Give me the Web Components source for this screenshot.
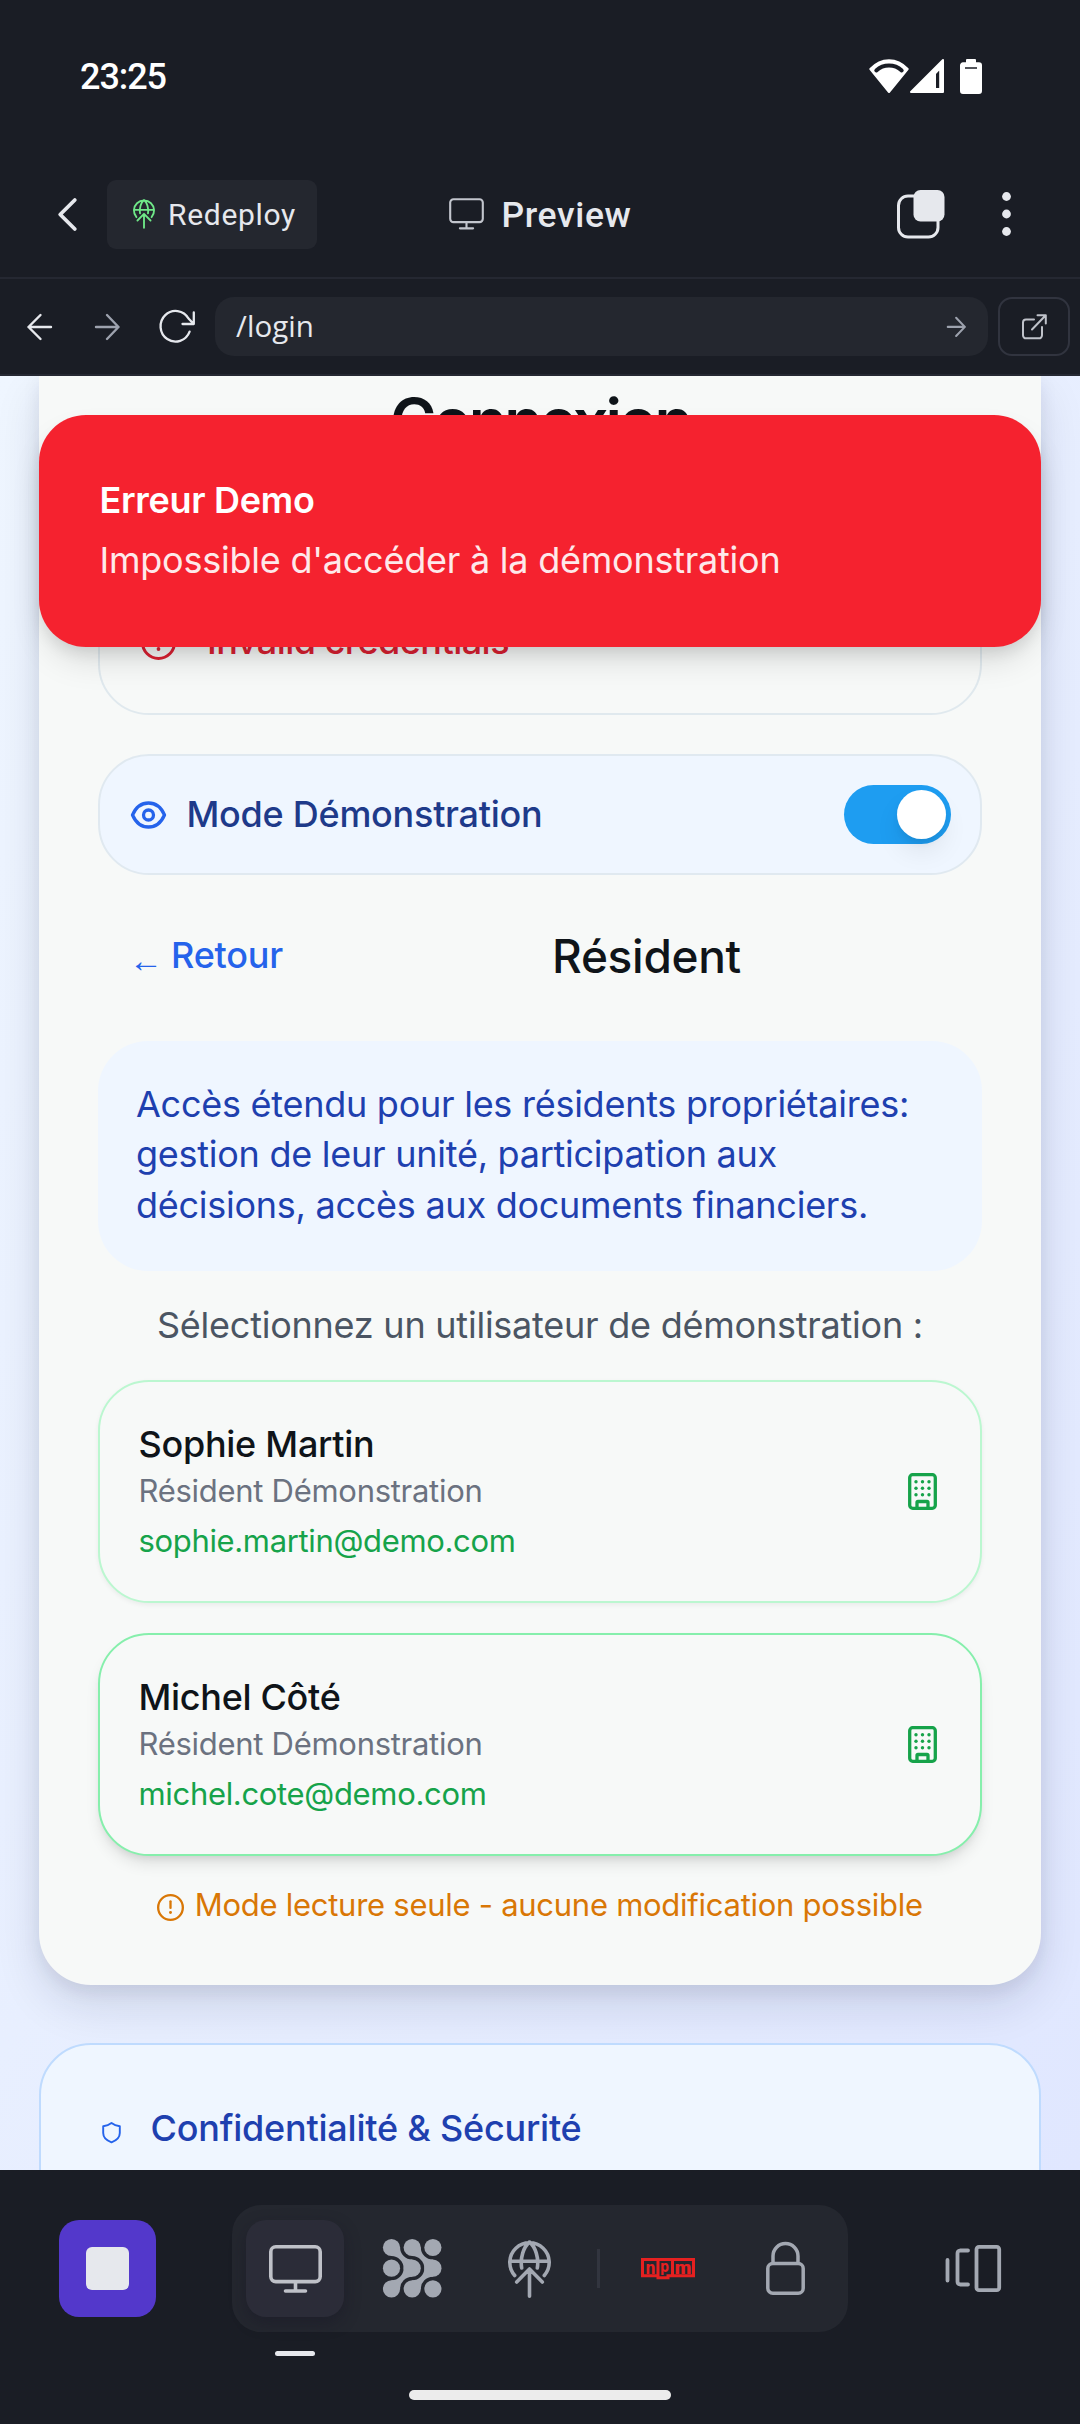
<!DOCTYPE html>
<html lang="fr">
<head>
<meta charset="utf-8">
<title>Preview</title>
<style>
html,body{margin:0;padding:0;background:#1a1d25}
body{width:1080px;height:2424px;overflow:hidden;font-family:Inter,sans-serif}
</style>
</head>
<body>
<preview-app></preview-app>
<script>
const define = (name, css, html, ready) => customElements.define(name, class extends HTMLElement {
  constructor() {
    super();
    const t = document.createElement('template');
    t.innerHTML = `<style>*{box-sizing:border-box}svg{display:block;flex:none;overflow:visible}${css}</style>${typeof html === 'function' ? '' : html}`;
    this.attachShadow({mode: 'open'}).append(t.content.cloneNode(true));
    if (typeof html === 'function') {
      const d = document.createElement('template');
      d.innerHTML = html(this);
      this.shadowRoot.append(d.content.cloneNode(true));
    }
  }
  connectedCallback() { if (ready) ready(this); }
});

const icons = {
  wifi: [38, 32, '<path d="M19 32 0.3 9C5.500 3.500 12 0.300 19 0.300S32.500 3.500 37.700 9Z" fill="currentColor"/><path d="M6.300 10.400C13.500 3.900 24.500 3.900 31.700 10.400" fill="none" stroke="#1a1d25" stroke-width="4"/>'],
  signal: [32, 32, '<path d="M32 0V32H0Z" fill="currentColor"/><path d="M24 13.500 29.200 8V29H24Z" fill="#1a1d25"/>'],
  battery: [20, 33, '<path d="M6 0h8v3.300h4a2 2 0 0 1 2 2V31a2 2 0 0 1-2 2H2a2 2 0 0 1-2-2V5.300a2 2 0 0 1 2-2h4Z" fill="currentColor"/><path d="M3 6.300h14v3.400H3Z" fill="#1a1d25"/>'],
  chevron: [19, 33, '<path d="M16.800 2 2.200 16.500 16.800 31" stroke-width="3.800"/>'],
  globe: [43, 58, '<path d="M6.700 35.500A19.700 19.700 0 1 1 36.300 35.500M2 21.300H41M13.700 28C12 18 15.500 7 21.500 2C27.500 7 31 18 29.300 28M21.500 29V56.200M8.700 42 21.500 29 34.300 42" stroke-width="3.600"/>'],
  monitor: [53, 48, '<rect x="1.800" y="1.800" width="49.400" height="34.800" rx="5"/><path d="M26.500 37V46M16.500 46H36.500"/>'],
  tabs: [48, 48, '<rect x="1.500" y="6" width="39.500" height="41" rx="9.500" stroke-width="3"/><rect x="16.500" y="0" width="31" height="31.500" rx="7" fill="currentColor" stroke="none"/>'],
  dots: [9, 44, '<g fill="currentColor" stroke="none"><circle cx="4.500" cy="4.500" r="4.400"/><circle cx="4.500" cy="22" r="4.400"/><circle cx="4.500" cy="39.500" r="4.400"/></g>'],
  left: [25, 26, '<path d="M24 13H1.500M13.500 1 1.500 13 13.500 25"/>'],
  right: [25, 26, '<path d="M1 13H23.500M12 1 23.500 13 12 25"/>'],
  reload: [36, 34, '<path d="M30.600 21.600A15 15.300 0 1 1 29.500 8.500L34.500 13.800M34.800 2.500V14H23.500"/>'],
  external: [25, 25, '<path d="M12 5.500H4A3 3 0 0 0 1 8.500V21.300A3 3 0 0 0 4 24.300H17A3 3 0 0 0 20 21.300V13M10 15.500 23.500 1.500M15.500 1.200H23.800V9.500"/>'],
  alert: [35, 35, '<circle cx="17.500" cy="17.500" r="16" stroke-width="3"/><path d="M17.500 9.500V18" stroke-width="3"/><circle cx="17.500" cy="24" r="1.900" fill="currentColor" stroke="none"/>'],
  eye: [35, 28, '<path d="M1.500 14C8.500-2 26.500-2 33.500 14C26.500 30 8.500 30 1.500 14Z" stroke-linejoin="round"/><circle cx="17.500" cy="14" r="5"/>'],
  building: [29, 37, '<rect x="1.700" y="1.700" width="25.600" height="33.600" rx="3"/><path d="M9 35V29.500A1 1 0 0 1 10 28.500H19A1 1 0 0 1 20 29.500V35"/><g fill="currentColor" stroke="none"><circle cx="8" cy="8.800" r="1.700"/><circle cx="14.500" cy="8.800" r="1.700"/><circle cx="21" cy="8.800" r="1.700"/><circle cx="8" cy="15.300" r="1.700"/><circle cx="14.500" cy="15.300" r="1.700"/><circle cx="21" cy="15.300" r="1.700"/><circle cx="8" cy="21.800" r="1.700"/><circle cx="14.500" cy="21.800" r="1.700"/><circle cx="21" cy="21.800" r="1.700"/></g>'],
  shield: [19, 21, '<path d="M9.500 1C7 3 4.500 3.800 1.200 4.200V11C1.200 15.500 4.500 18.500 9.500 20.300C14.500 18.500 17.800 15.500 17.800 11V4.200C14.500 3.800 12 3 9.500 1Z"/>'],
  mesh: [58, 59, (() => {
    const p = [8.500, 29.200, 49.900];
    const c = p.flatMap(x => p.map(y => `<circle cx="${x}" cy="${y}" r="8.600"/>`)).join('');
    const j = '<path d="M17.100 8.500A12.100 12.100 0 0 0 29.200 20.600V29.200H20.600A12.100 12.100 0 0 0 8.500 17.100V8.500Z"/>';
    const pair = j + `<g transform="translate(0 58.400) scale(1 -1)">${j}</g>`;
    return `<g fill="currentColor" stroke="none">${c}${pair}<g transform="translate(20.700)">${pair}</g></g>`;
  })()],
  npm: [54, 21, '<path d="M1.500 1.500H52.500V17.700H27V19.700H17V17.700H1.500ZM17 1.500V17.700M31.500 1.500V17.700" stroke-width="3" stroke-linejoin="miter"/><g font-family="DejaVu Sans Mono" font-weight="700" fill="currentColor" stroke="none"><text x="4" y="16" font-size="18">n</text><text x="19" y="14.300" font-size="15">p</text><text x="33.500" y="16" font-size="18" textLength="17" lengthAdjust="spacingAndGlyphs">m</text></g>'],
  lock: [39, 53, '<rect x="1.800" y="21.500" width="35.400" height="29.700" rx="5"/><path d="M7 21V14A12.500 12.500 0 0 1 32 14V21"/>'],
  panels: [56, 47, '<path d="M2.500 15V35.500M23 5.500H15A3 3 0 0 0 12.500 8.500V36.500A3 3 0 0 0 15 39.500H23" /><rect x="31.500" y="1.800" width="22.700" height="43.400" rx="2.500"/>']
};
define('ui-icon', ':host{display:block;flex:none}', el => {
  const [w, h, body] = icons[el.getAttribute('name')];
  const width = +(el.getAttribute('size') || w), sw = el.getAttribute('stroke') || 2;
  return `<svg width="${width}" height="${width * h / w}" viewBox="0 0 ${w} ${h}" fill="none" stroke="currentColor" stroke-width="${sw}" stroke-linecap="round" stroke-linejoin="round">${body}</svg>`;
});

define('status-bar', ':host{display:flex;height:151px;padding:59px 99px 0 80px;justify-content:space-between;color:#fff;font:500 36px/36px Roboto,sans-serif}div{display:flex;align-items:flex-start;padding-top:1px}ui-icon+ui-icon{margin-left:3px}ui-icon:last-child{margin-left:18px}',
  '<ui-text w="86">23:25</ui-text><div><ui-icon name="wifi"></ui-icon><ui-icon name="signal"></ui-icon><ui-icon name="battery"></ui-icon></div>');

define('app-header', `:host{display:grid;grid-template-columns:1fr auto 1fr;align-items:center;height:128px;border-bottom:2px solid #252832;color:#e6e8ed;font-family:Roboto,sans-serif}
.l,.c,.r{display:flex;align-items:center}.l{padding-left:58px}.deploy{display:flex;align-items:center;width:210px;height:69px;border-radius:9px;background:#24272f;margin-left:30px;padding-left:26px;font-size:30px}
.deploy ui-icon{color:#6fe888;margin-right:13px}.c{font-size:35.500px;font-weight:500}.c ui-icon{color:#c2c5cd;margin-right:18px}.c ui-text{padding-top:2px}.r{justify-content:flex-end;padding-right:69px}.r ui-icon+ui-icon{margin-left:57px}`,
  `<div class="l"><ui-icon name="chevron"></ui-icon><div class="deploy"><ui-icon name="globe" size="22"></ui-icon><ui-text w="128">Redeploy</ui-text></div></div>
<div class="c"><ui-icon name="monitor" size="35" stroke="3.200"></ui-icon><ui-text w="130">Preview</ui-text></div>
<div class="r"><ui-icon name="tabs"></ui-icon><ui-icon name="dots"></ui-icon></div>`);

define('address-bar', `:host{display:flex;align-items:center;height:97px;padding:0 10px 0 27px;border-bottom:2px solid #252832;color:#e6e8ed}
.fwd{color:#9da2ae;margin-left:43px}.rl{margin-left:39px}.url{display:flex;align-items:center;justify-content:space-between;flex:1;height:59px;border-radius:19px;background:#24272f;margin:0 10px 0 20px;padding:0 22px 0 21px;font:29.500px/40px "Open Sans",sans-serif}.url ui-icon{color:#9da2ae}.url ui-text{margin-top:-1px}.ext{display:flex;align-items:center;justify-content:center;width:72px;height:59px;border:2px solid #31343f;border-radius:14px;color:#bfc2ca}`,
  `<ui-icon name="left" stroke="2.400"></ui-icon><ui-icon class="fwd" name="right" stroke="2.400"></ui-icon><ui-icon class="rl" name="reload" stroke="2.300"></ui-icon>
<div class="url"><ui-text w="78">/login</ui-text><ui-icon name="right" size="19" stroke="2.700"></ui-icon></div><div class="ext"><ui-icon name="external"></ui-icon></div>`);

define('toast-message', ':host{display:flex;flex-direction:column;justify-content:center;align-items:flex-start;height:232px;padding:0 60.500px 2px;border-radius:47px;background:#f5222f;color:#fff;font-size:36px;box-shadow:0 18px 34px -6px rgba(0,0,0,.13),0 8px 16px -3px rgba(0,0,0,.1)}::slotted([slot=title]){font-weight:600;line-height:60px}::slotted([slot=text]){line-height:60px;opacity:.9}',
  '<slot name="title"></slot><slot name="text"></slot>');

define('mode-switch', ':host{display:flex;align-items:center;height:121px;border:2px solid #e0e9f0;border-radius:51px;background:#eff6ff;padding:0 29px 0 31px;font-size:36px;font-weight:500;color:#1e3a8a}::slotted(ui-text){margin-top:-2px}ui-icon{color:#2563eb;margin-right:20.500px}.track{margin-left:auto;width:107px;height:59px;border-radius:30px;background:#1e9df1;padding:5px;display:flex;justify-content:flex-end}.knob{width:49px;height:49px;border-radius:50%;background:#fff;box-shadow:0 14px 28px -3px rgba(0,0,0,.09),0 5px 10px -3px rgba(0,0,0,.09)}',
  '<ui-icon name="eye" stroke="3.300"></ui-icon><slot></slot><div class="track"><div class="knob"></div></div>');

define('user-card', ':host{display:flex;align-items:center;justify-content:space-between;height:223px;padding:0 43px 0 38.500px;border:2px solid #bbf7d0;border-radius:51px;background:#f7f9f8;box-shadow:0 2px 5px rgba(0,0,0,.06)}:host([active]){border-color:#86efac;box-shadow:0 10px 16px -3px rgba(0,0,0,.11),0 5px 10px -5px rgba(0,0,0,.12)}.info{display:flex;flex-direction:column;align-items:flex-start;padding-top:6px}.info ::slotted(*){line-height:50px;font-size:31px}.info ::slotted([slot=name]){font-size:36px;font-weight:500;line-height:43px;color:#0f1419}::slotted([slot=role]){color:#6b7280}::slotted([slot=mail]){color:#16a34a}ui-icon{color:#16a34a}',
  '<div class="info"><slot name="name"></slot><slot name="role"></slot><slot name="mail"></slot></div><ui-icon name="building" stroke="3.300"></ui-icon>');

define('login-card', `:host{display:flex;flex-direction:column;height:1609px;margin:0 39px;padding:7px 59px 0;background:#f7f9f8;border-radius:0 0 52px 52px;box-shadow:0 20px 46px rgba(20,25,60,.12),0 6px 18px rgba(20,25,60,.08);font-size:36px}
h1{margin:0;text-align:center;font-size:63px;line-height:76px;font-weight:600;color:#0f1419}
.alert{display:flex;align-items:center;height:150px;margin-top:106px;border:2px solid #e0e9ee;border-radius:51px;color:#dc2032;padding:5px 40px 0 41px;font-weight:500}.alert ui-text{margin:-4px 0 0 31px}
mode-switch{margin-top:39px}.head{display:grid;grid-template-columns:auto 1fr;align-items:center;height:80px;margin:41px 0 0 33px}.back{display:flex;align-items:center;color:#2563eb;font-weight:500}.arrow{font:400 34px/40px "Liberation Sans",sans-serif;width:42px;margin-left:-2px;padding-top:7px}.back ui-text{margin-top:-2px}
.head h2{margin:0;font-size:46px;font-weight:500;line-height:60px;color:#0f1419;padding-left:269px;margin-top:-1px}
.note{margin-top:45px;height:230px;border-radius:50px;background:#eff6ff;color:#1e40af;padding:37.500px 38px;line-height:50.600px;display:flex;flex-direction:column;align-items:flex-start}
.pick{text-align:center;line-height:50px;color:#4b5563;margin-top:29px}.a{margin-top:30px}.b{margin-top:30px}
.ro{display:flex;align-items:center;justify-content:center;color:#d97706;font-size:31px;line-height:46px;margin-top:26px}.ro ui-icon{margin:4px 10.500px 0 0}`,
`<h1><ui-text w="300">Connexion</ui-text></h1>
<div class="alert"><ui-icon name="alert"></ui-icon><ui-text w="302">Invalid credentials</ui-text></div>
<mode-switch><ui-text w="356">Mode Démonstration</ui-text></mode-switch>
<div class="head"><div class="back"><span class="arrow">←</span><ui-text w="112">Retour</ui-text></div><h2><ui-text w="189">Résident</ui-text></h2></div>
<div class="note"><ui-text w="773">Accès étendu pour les résidents propriétaires:</ui-text><ui-text w="641">gestion de leur unité, participation aux</ui-text><ui-text w="732">décisions, accès aux documents financiers.</ui-text></div>
<div class="pick"><ui-text w="766">Sélectionnez un utilisateur de démonstration :</ui-text></div>
<user-card class="a"><ui-text slot="name" w="236">Sophie Martin</ui-text><ui-text slot="role" w="344">Résident Démonstration</ui-text><ui-text slot="mail" w="377">sophie.martin@demo.com</ui-text></user-card>
<user-card class="b" active><ui-text slot="name" w="202">Michel Côté</ui-text><ui-text slot="role" w="344">Résident Démonstration</ui-text><ui-text slot="mail" w="348">michel.cote@demo.com</ui-text></user-card>
<div class="ro"><ui-icon name="alert" size="27"></ui-icon><ui-text w="728">Mode lecture seule - aucune modification possible</ui-text></div>`);

define('privacy-card', ':host{display:flex;align-items:flex-start;height:260px;margin:58px 39px 0;border:2px solid #bfdbfe;border-radius:52px;background:#eff6ff;padding:58px 61px;color:#1e40af;font-size:36px;line-height:50px;font-weight:500}ui-icon{color:#2563eb;margin:19px 29.500px 0 0}',
  '<ui-icon name="shield" stroke="1.900"></ui-icon><slot></slot>');

define('page-view', ':host{display:block;position:relative;height:1794px;overflow:hidden;background:linear-gradient(to bottom right,#eff6ff,#e0e7ff)}toast-message{position:absolute;left:39px;right:39px;top:39px}',
  `<login-card></login-card><privacy-card><ui-text w="431">Confidentialité &amp; Sécurité</ui-text></privacy-card>
<toast-message><ui-text slot="title" w="215">Erreur Demo</ui-text><ui-text slot="text" w="681">Impossible d'accéder à la démonstration</ui-text></toast-message>`);

define('dock-bar', `:host{display:flex;flex-direction:column;align-items:center;height:254px;color:#a3a8b2}.row{display:flex;align-items:center;width:100%;height:127px;margin-top:35px;padding:0 79px 0 59px}
.stop{display:grid;place-items:center;width:97px;height:97px;border-radius:20px;background:#5338cb;margin-right:76px}.stop i{width:43px;height:43px;border-radius:6px;background:#e6e8ed}
.dock{display:flex;align-items:center;width:616px;height:127px;border-radius:29px;background:#24272f;padding-left:14px}.active{position:relative;display:grid;place-items:center;width:98px;height:97px;border-radius:20px;background:#2b2c38;color:#bfc1c8;box-shadow:0 6px 16px rgba(20,18,35,.35)}.active::after{content:"";position:absolute;left:29px;top:131px;width:40px;height:5px;border-radius:2.500px;background:#e6e8ed}
.sep{width:3px;height:39px;background:#32353f;margin:0 41px 0 46px}.npm{color:#e62020}.home{width:262px;height:10px;border-radius:5px;background:#ececec;margin-top:58px}`,
`<div class="row"><div class="stop"><i></i></div><div class="dock"><div class="active"><ui-icon name="monitor" stroke="3.600"></ui-icon></div>
<ui-icon name="mesh" style="margin-left:39px"></ui-icon><ui-icon name="globe" style="margin-left:67px"></ui-icon><div class="sep"></div><ui-icon class="npm" name="npm"></ui-icon><ui-icon name="lock" stroke="3.500" style="margin-left:71px"></ui-icon></div>
<ui-icon name="panels" stroke="3.800" style="margin-left:auto"></ui-icon></div><div class="home"></div>`);

define('preview-app', ':host{display:flex;flex-direction:column;width:1080px;height:2424px;background:#1a1d25;overflow:hidden}',
  '<status-bar></status-bar><app-header></app-header><address-bar></address-bar><page-view></page-view><dock-bar></dock-bar>');

/* Single-line label whose tracking spreads it over a given advance width. */
define('ui-text', ':host{display:inline-block;white-space:nowrap}', '<slot></slot>', el => {
  const n = el.textContent.length, natural = el.getBoundingClientRect().width;
  if (natural) el.style.letterSpacing = ((+el.getAttribute('w') - natural) / n).toFixed(3) + 'px';
});
</script>
</body>
</html>
